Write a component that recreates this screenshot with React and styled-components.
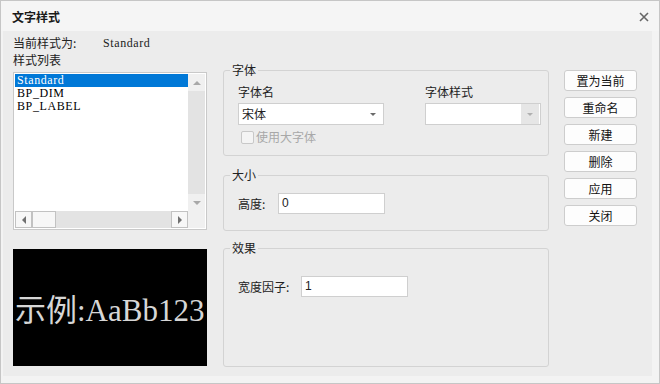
import React from "react";
import styled, { createGlobalStyle } from "styled-components";

const GlobalStyle = createGlobalStyle`
  html, body {
    margin: 0;
    padding: 0;
    background: #ffffff;
  }
  body {
    font-family: "Noto Sans CJK SC", "Noto Sans", sans-serif;
    font-size: 12px;
    color: #222;
  }
  * {
    box-sizing: border-box;
  }
`;

const Dialog = styled.div`
  width: 660px;
  height: 384px;
  border: 1px solid #c6c6c6;
  background: #f3f3f3;
  display: flex;
  flex-direction: column;
`;

const TitleBar = styled.div`
  height: 30px;
  flex: none;
  display: flex;
  align-items: center;
  justify-content: space-between;
  padding: 1px 10px 0 11px;
  background: #f5f5f5;
`;

const Title = styled.div`
  font-weight: bold;
  font-size: 12px;
  line-height: 16px;
  color: #1a1a1a;
`;

const Body = styled.div`
  flex: 1;
  margin: 0 7px 7px 2px;
  background: #ececec;
  display: flex;
  padding: 4px 0 9px 10px;
`;

const LeftCol = styled.div`
  width: 194px;
  flex: none;
  display: flex;
  flex-direction: column;
`;

const CurrentRow = styled.div`
  display: flex;
  line-height: 16px;
  height: 16px;
  & span:first-child {
    width: 90px;
  }
`;

const Mono = styled.span`
  font-family: "Liberation Serif", serif;
  font-size: 12px;
  letter-spacing: 0.6px;
`;

const ListLabel = styled.div`
  line-height: 16px;
  margin-top: 1px;
`;

const List = styled.div`
  margin-top: 4px;
  height: 158px;
  border: 1px solid #c9c9c9;
  background: #fff;
  padding: 1px;
  display: grid;
  grid-template-columns: 1fr 17px;
  grid-template-rows: 1fr 17px;
`;

const Items = styled.div`
  display: flex;
  flex-direction: column;
`;

const Item = styled.div`
  height: 13px;
  line-height: 13px;
  padding-left: 2px;
  font-family: "Liberation Serif", serif;
  font-size: 12px;
  letter-spacing: 0.6px;
  color: ${(p) => (p.selected ? "#fff" : "#000")};
  background: ${(p) => (p.selected ? "#0078d7" : "transparent")};
`;

const VScroll = styled.div`
  display: flex;
  flex-direction: column;
`;

const HScroll = styled.div`
  display: flex;
`;

const Track = styled.div`
  flex: 1;
  background: #e3e3e3;
`;

const ScrollBtn = styled.div`
  width: 17px;
  height: 17px;
  flex: none;
  display: flex;
  align-items: center;
  justify-content: center;
  background: ${(p) => (p.boxed ? "#f7f7f7" : "#f0f0f0")};
  border: ${(p) => (p.boxed ? "1px solid #c2c2c2" : "none")};
`;

const Thumb = styled.div`
  width: 24px;
  height: 17px;
  flex: none;
  background: #f7f7f7;
  border: 1px solid #c2c2c2;
`;

const Corner = styled.div`
  background: #f0f0f0;
`;

const Arrow = styled.span`
  width: 0;
  height: 0;
  border-style: solid;
  ${(p) =>
    p.dir === "up"
      ? `border-width: 0 4px 4px 4px; border-color: transparent transparent ${p.color} transparent;`
      : p.dir === "down"
      ? `border-width: 4px 4px 0 4px; border-color: ${p.color} transparent transparent transparent;`
      : p.dir === "left"
      ? `border-width: 4px 4px 4px 0; border-color: transparent ${p.color} transparent transparent;`
      : `border-width: 4px 0 4px 4px; border-color: transparent transparent transparent ${p.color};`}
`;

const Preview = styled.div`
  margin-top: 19px;
  height: 117px;
  background: #000;
  color: #d6d6d6;
  font-family: "Liberation Serif", "Noto Sans CJK SC", serif;
  font-size: 31px;
  display: flex;
  align-items: center;
  padding-left: 2px;
  overflow: hidden;
  white-space: nowrap;
`;

const Middle = styled.div`
  width: 326px;
  flex: none;
  margin-left: 16px;
  margin-top: 27px;
  display: flex;
  flex-direction: column;
`;

const Group = styled.fieldset`
  margin: 0;
  margin-top: ${(p) => p.gap || 0}px;
  padding: 0 6px;
  border: 1px solid #d3d3d3;
  border-radius: 3px;
  min-width: 0;
  flex: ${(p) => (p.grow ? 1 : "none")};
`;

const Legend = styled.legend`
  padding: 0 2px;
  line-height: 16px;
  font-size: 12px;
  color: #222;
`;

const Content = styled.div`
  padding: ${(p) => p.top}px 0 ${(p) => p.bottom}px 8px;
`;

const FontRow = styled.div`
  display: flex;
  gap: 41px;
`;

const FontCol = styled.div`
  width: ${(p) => p.w}px;
  display: flex;
  flex-direction: column;
`;

const FieldLabel = styled.div`
  line-height: 16px;
  margin-bottom: 3px;
`;

const Select = styled.div`
  height: 22px;
  border: 1px solid #cfcfcf;
  background: #fff;
  display: flex;
  align-items: center;
  justify-content: space-between;
  padding-left: 3px;
  line-height: 16px;
`;

const SelectArrow = styled.div`
  width: ${(p) => (p.disabled ? 18 : 20)}px;
  align-self: stretch;
  display: flex;
  align-items: center;
  justify-content: center;
  background: ${(p) => (p.disabled ? "#e6e6e6" : "transparent")};
  margin: ${(p) => (p.disabled ? "0 1px 0 0" : "0")};
  & span {
    border-width: 3px 3px 0 3px;
  }
`;

const CheckRow = styled.div`
  margin-top: 4px;
  height: 16px;
  display: flex;
  align-items: center;
  gap: 2px;
  padding-left: 3px;
  color: #a8a8a8;
  line-height: 16px;
`;

const CheckBox = styled.span`
  width: 13px;
  height: 13px;
  border: 1px solid #c8c8c8;
  border-radius: 2px;
  background: #f4f4f4;
`;

const FieldRow = styled.div`
  display: flex;
  align-items: center;
  margin-top: ${(p) => p.top}px;
  & > span {
    width: ${(p) => p.labelWidth}px;
    line-height: 16px;
  }
`;

const Input = styled.div`
  width: 107px;
  height: 21px;
  border: 1px solid #cfcfcf;
  background: #fff;
  padding: 0 3px;
  line-height: 19px;
  font-family: "Liberation Sans", "Noto Sans CJK SC", sans-serif;
  font-size: 12px;
`;

const Buttons = styled.div`
  width: 73px;
  flex: none;
  margin-left: 15px;
  margin-top: 35px;
  display: flex;
  flex-direction: column;
  gap: 6px;
`;

const Button = styled.button`
  width: 73px;
  height: 21px;
  padding: 0;
  border: 1px solid #cdcdcd;
  border-radius: 3px;
  background: #fdfdfd;
  font-family: "Noto Sans CJK SC", sans-serif;
  font-size: 12px;
  line-height: 16px;
  color: #111;
`;

const CloseIcon = () => (
  <svg width="10" height="10" viewBox="0 0 10 10">
    <path d="M1 1 L9 9 M9 1 L1 9" stroke="#666" strokeWidth="1.6" />
  </svg>
);

const styles = ["Standard", "BP_DIM", "BP_LABEL"];
const actions = ["置为当前", "重命名", "新建", "删除", "应用", "关闭"];

const App = () => {
  return (
    <>
      <GlobalStyle />
      <Dialog>
        <TitleBar>
          <Title>文字样式</Title>
          <CloseIcon />
        </TitleBar>
        <Body>
          <LeftCol>
            <CurrentRow>
              <span>当前样式为:</span>
              <Mono>Standard</Mono>
            </CurrentRow>
            <ListLabel>样式列表</ListLabel>
            <List>
              <Items>
                {styles.map((s, i) => (
                  <Item key={s} selected={i === 0}>
                    {s}
                  </Item>
                ))}
              </Items>
              <VScroll>
                <ScrollBtn>
                  <Arrow dir="up" color="#a8a8a8" />
                </ScrollBtn>
                <Track />
                <ScrollBtn>
                  <Arrow dir="down" color="#a8a8a8" />
                </ScrollBtn>
              </VScroll>
              <HScroll>
                <ScrollBtn boxed>
                  <Arrow dir="left" color="#707070" />
                </ScrollBtn>
                <Thumb />
                <Track />
                <ScrollBtn boxed>
                  <Arrow dir="right" color="#707070" />
                </ScrollBtn>
              </HScroll>
              <Corner />
            </List>
            <Preview>示例:AaBb123</Preview>
          </LeftCol>

          <Middle>
            <Group>
              <Legend>字体</Legend>
              <Content top={6} bottom={10}>
                <FontRow>
                  <FontCol w={146}>
                    <FieldLabel>字体名</FieldLabel>
                    <Select>
                      <span>宋体</span>
                      <SelectArrow>
                        <Arrow dir="down" color="#6a6a6a" />
                      </SelectArrow>
                    </Select>
                  </FontCol>
                  <FontCol w={116}>
                    <FieldLabel>字体样式</FieldLabel>
                    <Select>
                      <span />
                      <SelectArrow disabled>
                        <Arrow dir="down" color="#b0b0b0" />
                      </SelectArrow>
                    </Select>
                  </FontCol>
                </FontRow>
                <CheckRow>
                  <CheckBox />
                  <span>使用大字体</span>
                </CheckRow>
              </Content>
            </Group>

            <Group gap={11}>
              <Legend>大小</Legend>
              <Content top={10} bottom={16}>
                <FieldRow top={0} labelWidth={40}>
                  <span>高度:</span>
                  <Input>0</Input>
                </FieldRow>
              </Content>
            </Group>

            <Group gap={9} grow>
              <Legend>效果</Legend>
              <Content top={20} bottom={0}>
                <FieldRow top={0} labelWidth={63}>
                  <span>宽度因子:</span>
                  <Input>1</Input>
                </FieldRow>
              </Content>
            </Group>
          </Middle>

          <Buttons>
            {actions.map((a) => (
              <Button key={a}>{a}</Button>
            ))}
          </Buttons>
        </Body>
      </Dialog>
    </>
  );
};

export default App;
